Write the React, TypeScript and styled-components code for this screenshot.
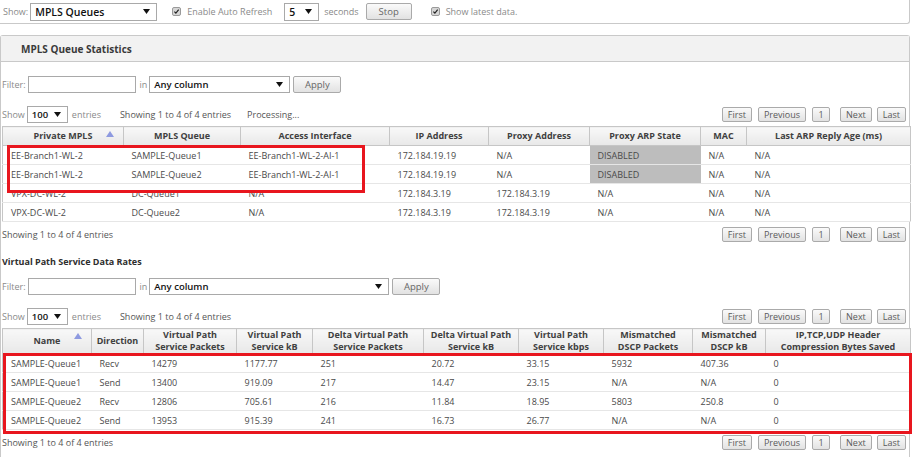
import React from 'react'
import styled, { createGlobalStyle } from 'styled-components'

const GlobalStyle = createGlobalStyle`
  html, body {
    margin: 0;
    padding: 0;
    background: #ffffff;
  }
  body {
    font-family: 'Open Sans', 'Noto Sans', sans-serif;
    font-size: 9px;
    color: #4a4a4a;
  }
`;

// DATA
const mplsColumns = [
    { title: 'Private MPLS', width: 121, sorted: true },
    { title: 'MPLS Queue', width: 117 },
    { title: 'Access Interface', width: 149 },
    { title: 'IP Address', width: 99 },
    { title: 'Proxy Address', width: 101 },
    { title: 'Proxy ARP State', width: 111 },
    { title: 'MAC', width: 46 },
    { title: 'Last ARP Reply Age (ms)', width: 164 },
];

const mplsRows = [
    ['EE-Branch1-WL-2', 'SAMPLE-Queue1', 'EE-Branch1-WL-2-AI-1', '172.184.19.19', 'N/A', 'DISABLED', 'N/A', 'N/A'],
    ['EE-Branch1-WL-2', 'SAMPLE-Queue2', 'EE-Branch1-WL-2-AI-1', '172.184.19.19', 'N/A', 'DISABLED', 'N/A', 'N/A'],
    ['VPX-DC-WL-2', 'DC-Queue1', 'N/A', '172.184.3.19', '172.184.3.19', 'N/A', 'N/A', 'N/A'],
    ['VPX-DC-WL-2', 'DC-Queue2', 'N/A', '172.184.3.19', '172.184.3.19', 'N/A', 'N/A', 'N/A'],
];

const rateColumns = [
    { title: ['Name'], width: 89, sorted: true },
    { title: ['Direction'], width: 52 },
    { title: ['Virtual Path', 'Service Packets'], width: 93 },
    { title: ['Virtual Path', 'Service kB'], width: 76 },
    { title: ['Delta Virtual Path', 'Service Packets'], width: 111 },
    { title: ['Delta Virtual Path', 'Service kB'], width: 95 },
    { title: ['Virtual Path', 'Service kbps'], width: 85 },
    { title: ['Mismatched', 'DSCP Packets'], width: 89 },
    { title: ['Mismatched', 'DSCP kB'], width: 73 },
    { title: ['IP,TCP,UDP Header', 'Compression Bytes Saved'], width: 145 },
];

const rateRows = [
    ['SAMPLE-Queue1', 'Recv', '14279', '1177.77', '251', '20.72', '33.15', '5932', '407.36', '0'],
    ['SAMPLE-Queue1', 'Send', '13400', '919.09', '217', '14.47', '23.15', 'N/A', 'N/A', '0'],
    ['SAMPLE-Queue2', 'Recv', '12806', '705.61', '216', '11.84', '18.95', '5803', '250.8', '0'],
    ['SAMPLE-Queue2', 'Send', '13953', '915.39', '241', '16.73', '26.77', 'N/A', 'N/A', '0'],
];

// SMALL PARTS
const Arrow = () => (
    <svg width="7" height="5" viewBox="0 0 7 5"><path d="M0 0h7L3.5 5z" fill="#111" /></svg>
);

const SortArrow = () => (
    <SortMark width="8" height="6" viewBox="0 0 8 6"><path d="M0 6L4 0l4 6z" fill="#8e9ae0" /></SortMark>
);

const Check = ({ left }: { left: number }) => (
    <CheckBox $left={left}>
        <svg width="9" height="9" viewBox="0 0 9 9">
            <path d="M1.8 4.6l1.9 2 3.6-4.6" stroke="#222" strokeWidth="1.5" fill="none" />
        </svg>
    </CheckBox>
);

const Select = ({ value, width, big, left = 0 }: { value: string; width: number; big?: boolean; left?: number }) => (
    <SelectBox $width={width} $big={big} $left={left}>
        <span>{value}</span>
        <Arrow />
    </SelectBox>
);

const Pager = () => (
    <PagerGroup>
        <PageButton>First</PageButton>
        <PageButton>Previous</PageButton>
        <PageButton>1</PageButton>
        <PageButton $gap={10}>Next</PageButton>
        <PageButton $gap={5}>Last</PageButton>
    </PagerGroup>
);

const FilterBar = ({ selectWidth, top }: { selectWidth: number; top: number }) => (
    <FilterRow $top={top}>
        <Muted>Filter:</Muted>
        <TextInput />
        <Muted $left={4}>in</Muted>
        <Select value="Any column" width={selectWidth} />
        <ApplyButton>Apply</ApplyButton>
    </FilterRow>
);

export default function App() {
    return (
        <Page>
            <GlobalStyle />
            <Toolbar>
                <Muted $left={3}>Show:</Muted>
                <Select value="MPLS Queues" width={127} big />
                <Check left={15} />
                <ToolbarLabel>Enable Auto Refresh</ToolbarLabel>
                <Select value="5" width={35} big left={12} />
                <ToolbarLabel $left={5}>seconds</ToolbarLabel>
                <StopButton>Stop</StopButton>
                <Check left={19} />
                <ToolbarLabel>Show latest data.</ToolbarLabel>
            </Toolbar>

            <Panel>
                <PanelHeader>MPLS Queue Statistics</PanelHeader>

                <FilterBar selectWidth={141} top={14} />
                <ShowRow>
                    <Muted>Show</Muted>
                    <Select value="100" width={41} />
                    <Muted $left={4}>entries</Muted>
                    <Info $left={17}>Showing 1 to 4 of 4 entries</Info>
                    <Info $left={16}>Processing...</Info>
                    <Pager />
                </ShowRow>

                <Annotated>
                    <DataTable>
                        <colgroup>
                            {mplsColumns.map(c => <col key={c.title} style={{ width: c.width }} />)}
                        </colgroup>
                        <thead>
                            <tr>
                                {mplsColumns.map(c => (
                                    <Th key={c.title} $height={18}>
                                        {c.title}
                                        {c.sorted && <SortArrow />}
                                    </Th>
                                ))}
                            </tr>
                        </thead>
                        <tbody>
                            {mplsRows.map((row, i) => (
                                <tr key={i}>
                                    {row.map((cell, j) => (
                                        <Td key={j} $shade={cell === 'DISABLED'}>{cell}</Td>
                                    ))}
                                </tr>
                            ))}
                        </tbody>
                    </DataTable>
                    <RedBox $left={5} $top={19} $width={358} $height={48} />
                </Annotated>

                <FooterRow>
                    <Info>Showing 1 to 4 of 4 entries</Info>
                    <Pager />
                </FooterRow>

                <SectionTitle>Virtual Path Service Data Rates</SectionTitle>

                <FilterBar selectWidth={240} top={11} />
                <ShowRow>
                    <Muted>Show</Muted>
                    <Select value="100" width={41} />
                    <Muted $left={4}>entries</Muted>
                    <Info $left={17}>Showing 1 to 4 of 4 entries</Info>
                    <Pager />
                </ShowRow>

                <Annotated>
                    <DataTable>
                        <colgroup>
                            {rateColumns.map(c => <col key={c.title.join()} style={{ width: c.width }} />)}
                        </colgroup>
                        <thead>
                            <tr>
                                {rateColumns.map(c => (
                                    <Th key={c.title.join()} $height={24}>
                                        {c.title.map((line, k) => <HeadLine key={k}>{line}</HeadLine>)}
                                        {c.sorted && <SortArrow />}
                                    </Th>
                                ))}
                            </tr>
                        </thead>
                        <tbody>
                            {rateRows.map((row, i) => (
                                <tr key={i}>
                                    {row.map((cell, j) => <Td key={j}>{cell}</Td>)}
                                </tr>
                            ))}
                        </tbody>
                    </DataTable>
                    <RedBox $left={1} $top={25} $width={909} $height={81} />
                </Annotated>

                <FooterRow>
                    <Info>Showing 1 to 4 of 4 entries</Info>
                    <Pager />
                </FooterRow>
            </Panel>
        </Page>
    )
}

// STYLES
const Page = styled.div`
    width: 915px;
    height: 467px;
    overflow: hidden;
`;

const Toolbar = styled.div`
    width: 910px;
    height: 24px;
    box-sizing: border-box;
    display: flex;
    align-items: center;
    border-right: 1px solid #c9c9c9;
    border-bottom: 1px solid #c9c9c9;
    border-bottom-right-radius: 3px;
`;

const Muted = styled.span<{ $left?: number }>`
    color: #8a8a8a;
    font-size: 9px;
    margin-left: ${p => p.$left ?? 0}px;
    margin-right: 2px;
    white-space: nowrap;
`;

const ToolbarLabel = styled.span<{ $left?: number }>`
    color: #8a8a8a;
    font-size: 9px;
    margin-left: ${p => p.$left ?? 6}px;
    white-space: nowrap;
`;

const Info = styled.span<{ $left?: number }>`
    color: #555;
    font-size: 9px;
    margin-left: ${p => p.$left ?? 0}px;
    white-space: nowrap;
`;

const SelectBox = styled.div<{ $width: number; $big?: boolean; $left: number }>`
    width: ${p => p.$width}px;
    height: ${p => (p.$big ? 18 : 17)}px;
    margin-left: ${p => p.$left}px;
    box-sizing: border-box;
    flex-shrink: 0;
    border: 1px solid #a9a9a9;
    background: #fff;
    display: flex;
    align-items: center;
    justify-content: space-between;
    padding: 0 6px 0 4px;
    color: #111;
    font-size: ${p => (p.$big ? 10.5 : 9.5)}px;
    font-weight: 600;
    span { white-space: nowrap; }
`;

const CheckBox = styled.span<{ $left: number }>`
    width: 9px;
    height: 9px;
    box-sizing: border-box;
    flex-shrink: 0;
    margin-left: ${p => p.$left}px;
    border: 1px solid #9a9a9a;
    border-radius: 2px;
    background: #d6d6d6;
    display: flex;
    align-items: center;
    justify-content: center;
    svg { display: block; }
`;

const GreyButton = styled.button`
    box-sizing: border-box;
    flex-shrink: 0;
    border: 1px solid #aaaaaa;
    border-radius: 2px;
    background: linear-gradient(#fafafa, #e2e2e2);
    color: #666;
    font-family: 'Open Sans', 'Noto Sans', sans-serif;
    padding: 0;
    display: flex;
    align-items: center;
    justify-content: center;
`;

const StopButton = styled(GreyButton)`
    width: 46px;
    height: 17px;
    margin-left: 7px;
    font-size: 9.5px;
`;

const ApplyButton = styled(GreyButton)`
    width: 48px;
    height: 17px;
    margin-left: 3px;
    font-size: 9.5px;
`;

const PagerGroup = styled.div`
    margin-left: auto;
    margin-right: 3px;
    display: flex;
    align-items: center;
`;

const PageButton = styled(GreyButton)<{ $gap?: number }>`
    height: 15px;
    min-width: 18px;
    padding: 0 5px;
    margin-left: ${p => p.$gap ?? 6}px;
    font-size: 9px;
    color: #5a5a5a;
    &:first-child { margin-left: 0; }
`;

const Panel = styled.section`
    margin-top: 11px;
    width: 910px;
    height: 422px;
    box-sizing: border-box;
    border: 1px solid #c9c9c9;
    border-bottom: none;
    border-radius: 3px 3px 0 0;
    padding-left: 1px;
`;

const PanelHeader = styled.header`
    height: 25px;
    margin-left: -1px;
    background: #f2f2f2;
    border-bottom: 1px solid #c9c9c9;
    display: flex;
    align-items: center;
    padding-left: 20px;
    color: #3a3a3a;
    font-size: 10px;
    font-weight: 700;
`;

const FilterRow = styled.div<{ $top: number }>`
    height: 17px;
    margin-top: ${p => p.$top}px;
    display: flex;
    align-items: center;
`;

const TextInput = styled.div`
    width: 108px;
    height: 17px;
    box-sizing: border-box;
    border: 1px solid #a9a9a9;
    background: #fff;
`;

const ShowRow = styled.div`
    height: 17px;
    margin-top: 13px;
    display: flex;
    align-items: center;
`;

const Annotated = styled.div`
    position: relative;
    margin-top: 3px;
`;

const DataTable = styled.table`
    width: 908px;
    table-layout: fixed;
    border-collapse: collapse;
    border: 1px solid #c6c6c6;
`;

const Th = styled.th<{ $height: number }>`
    position: relative;
    height: ${p => p.$height}px;
    padding: 0;
    background: linear-gradient(#f8f8f8, #e8e8e8);
    border: 1px solid #c6c6c6;
    color: #404040;
    font-size: 9px;
    font-weight: 700;
    text-align: center;
    line-height: 12px;
    white-space: nowrap;
`;

const HeadLine = styled.div`
    height: 12px;
`;

const SortMark = styled.svg`
    position: absolute;
    right: 9px;
    top: 4px;
`;

const Td = styled.td<{ $shade?: boolean }>`
    height: 18px;
    padding: 0 0 0 8px;
    border-bottom: 1px solid #e6e6e6;
    background: ${p => (p.$shade ? '#bdbdbd' : '#ffffff')};
    color: #4a4a4a;
    font-size: 9px;
    white-space: nowrap;
    overflow: hidden;
`;

const RedBox = styled.div<{ $left: number; $top: number; $width: number; $height: number }>`
    position: absolute;
    left: ${p => p.$left}px;
    top: ${p => p.$top}px;
    width: ${p => p.$width}px;
    height: ${p => p.$height}px;
    box-sizing: border-box;
    border: 3px solid #e8161e;
    pointer-events: none;
`;

const FooterRow = styled.div`
    height: 16px;
    margin-top: 4px;
    display: flex;
    align-items: center;
`;

const SectionTitle = styled.h3`
    margin: 13px 0 0 0;
    height: 12px;
    display: flex;
    align-items: center;
    color: #2e2e2e;
    font-size: 9px;
    font-weight: 700;
`;
